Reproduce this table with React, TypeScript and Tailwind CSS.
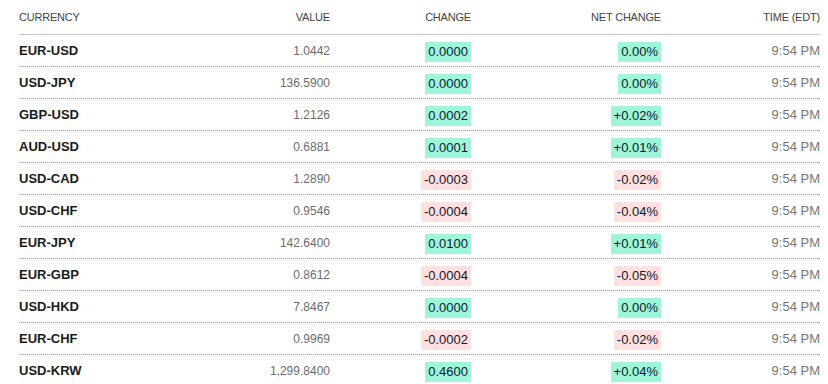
import React from "react";

type Row = { c: string; v: string; ch: string; nc: string; up: boolean };

const rows: Row[] = [
  { c: "EUR-USD", v: "1.0442", ch: "0.0000", nc: "0.00%", up: true },
  { c: "USD-JPY", v: "136.5900", ch: "0.0000", nc: "0.00%", up: true },
  { c: "GBP-USD", v: "1.2126", ch: "0.0002", nc: "+0.02%", up: true },
  { c: "AUD-USD", v: "0.6881", ch: "0.0001", nc: "+0.01%", up: true },
  { c: "USD-CAD", v: "1.2890", ch: "-0.0003", nc: "-0.02%", up: false },
  { c: "USD-CHF", v: "0.9546", ch: "-0.0004", nc: "-0.04%", up: false },
  { c: "EUR-JPY", v: "142.6400", ch: "0.0100", nc: "+0.01%", up: true },
  { c: "EUR-GBP", v: "0.8612", ch: "-0.0004", nc: "-0.05%", up: false },
  { c: "USD-HKD", v: "7.8467", ch: "0.0000", nc: "0.00%", up: true },
  { c: "EUR-CHF", v: "0.9969", ch: "-0.0002", nc: "-0.02%", up: false },
  { c: "USD-KRW", v: "1,299.8400", ch: "0.4600", nc: "+0.04%", up: true },
];

const grid = "grid grid-cols-[181px_130px_141px_190px_159px] items-center";

function Badge({ text, up }: { text: string; up: boolean }) {
  return (
    <span
      className={`inline-block h-[20px] leading-[20px] px-[3px] text-[13px] text-[#111827] ${
        up ? "bg-[#9ef5dc]" : "bg-[#ffe0e0]"
      }`}
    >
      {text}
    </span>
  );
}

export default function App() {
  return (
    <div
      className="w-[828px] h-[384px] bg-white pl-[19px] pr-[8px] overflow-hidden"
      style={{ fontFamily: '"Liberation Sans", Arial, sans-serif' }}
    >
      <div className={`${grid} h-[35px] border-b border-[#c8c8c8] text-[11px] text-[#444] uppercase tracking-[-0.2px]`}>
        <div>Currency</div>
        <div className="text-right">Value</div>
        <div className="text-right">Change</div>
        <div className="text-right">Net Change</div>
        <div className="text-right">Time (EDT)</div>
      </div>
      {rows.map((r, i) => (
        <div
          key={r.c}
          className={`${grid} h-[32px] ${i < rows.length - 1 ? "border-b border-dotted border-[#999]" : ""}`}
        >
          <div className="text-[13px] font-bold text-[#1a1a1a]">{r.c}</div>
          <div className="text-right text-[12px] text-[#6b6b6b]">{r.v}</div>
          <div className="text-right">
            <Badge text={r.ch} up={r.up} />
          </div>
          <div className="text-right">
            <Badge text={r.nc} up={r.up} />
          </div>
          <div className="text-right text-[13px] text-[#777]">9:54 PM</div>
        </div>
      ))}
    </div>
  );
}
